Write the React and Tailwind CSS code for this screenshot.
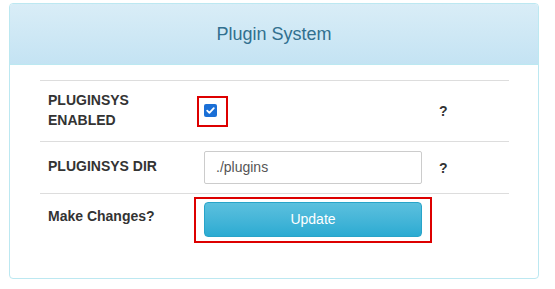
export default function App() {
  const font = { fontFamily: '"Liberation Sans", Arial, sans-serif' };
  return (
    <div className="w-[555px] h-[289px] bg-white pt-[3px] pl-[9px]" style={font}>
      <div className="w-[530px] h-[276px] border border-[#bce8f1] rounded-[4px] bg-white">
        <div className="h-[61px] flex items-center justify-center rounded-t-[3px] border-b border-[#bce8f1] bg-gradient-to-b from-[#d9edf7] to-[#c4e3f3]">
          <span className="text-[18px] text-[#31708f] leading-none">Plugin System</span>
        </div>
        <div className="pt-[15px] pl-[30px] w-[499px]">
          <div className="border-t border-[#dddddd]">
            {/* Row 1 */}
            <div className="flex items-center h-[61px] border-b border-[#dddddd]">
              <div className="w-[156px] pl-[8px] pb-[2px] text-[14px] leading-[20px] font-bold text-[#333]">
                PLUGINSYS<br />ENABLED
              </div>
              <div className="w-[234px] pl-[1px] flex items-center">
                <div className="w-[31px] h-[31px] border-2 border-[#dd0000] pl-[5px] pt-[6px]">
                  <div className="w-[13px] h-[13px] rounded-[2px] bg-[#1a6fd6] flex items-center justify-center">
                    <svg width="11" height="11" viewBox="0 0 11 11">
                      <path d="M2.2 5.6 L4.4 7.8 L8.8 3.2" fill="none" stroke="white" strokeWidth="1.8" strokeLinecap="round" strokeLinejoin="round" />
                    </svg>
                  </div>
                </div>
              </div>
              <div className="pl-[9px] text-[14px] font-bold text-[#333] pt-[1px]">?</div>
            </div>
            {/* Row 2 */}
            <div className="flex items-center h-[52px] border-b border-[#dddddd]">
              <div className="w-[156px] pl-[8px] text-[14px] leading-[20px] font-bold text-[#333] pb-[3px]">
                PLUGINSYS DIR
              </div>
              <div className="w-[234px] pl-[8px]">
                <div className="w-[218px] h-[33px] border border-[#cccccc] rounded-[2px] flex items-center pl-[11px] text-[14px] text-[#555]">
                  ./plugins
                </div>
              </div>
              <div className="pl-[9px] text-[14px] font-bold text-[#333] pt-[1px]">?</div>
            </div>
            {/* Row 3 */}
            <div className="flex items-start">
              <div className="w-[156px] pl-[8px] pt-[12px] text-[14px] leading-[20px] font-bold text-[#333]">
                Make Changes?
              </div>
              <div className="pt-[3px]">
                <div className="w-[238px] h-[46px] border-2 border-[#dd0000] -ml-[2px] pl-[8px] pt-[3px]">
                  <div className="w-[218px] h-[35px] rounded-[4px] border border-[#28a4c9] bg-gradient-to-b from-[#5bc0de] to-[#2aabd2] flex items-center justify-center text-[14px] text-white">
                    Update
                  </div>
                </div>
              </div>
            </div>
          </div>
        </div>
      </div>
    </div>
  );
}
